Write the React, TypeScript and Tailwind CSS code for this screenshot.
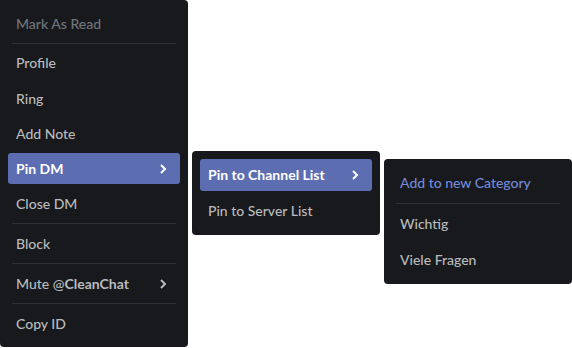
import React from "react";

const Chevron = () => (
  <svg width="18" height="18" viewBox="0 0 18 18" className="shrink-0">
    <polyline points="7,5 11,9 7,13" fill="none" stroke="currentColor" strokeWidth="2" strokeLinecap="butt" strokeLinejoin="miter" />
  </svg>
);

type ItemProps = {
  children: React.ReactNode;
  active?: boolean;
  sub?: boolean;
  tone?: "normal" | "muted" | "brand";
};

const Item = ({ children, active, sub, tone = "normal" }: ItemProps) => {
  const color = active
    ? "bg-[#5c6eb1] text-white font-bold"
    : tone === "muted"
    ? "text-[#72767d] font-medium"
    : tone === "brand"
    ? "text-[#7289da] font-medium"
    : "text-[#b9bbbe] font-medium";
  return (
    <div className={`my-[2px] flex h-8 items-center justify-between rounded-[3px] px-2 text-[14px] leading-[18px] ${color}`}>
      <span>{children}</span>
      {sub && <Chevron />}
    </div>
  );
};

const Sep = () => <div className="mx-1 my-[2px] h-px bg-[#2e3035]" />;

const Menu = ({ children, className = "" }: { children: React.ReactNode; className?: string }) => (
  <div className={`flex w-[188px] shrink-0 flex-col bg-[#18191c] px-2 py-[6px] ${className}`}>{children}</div>
);

export default function App() {
  return (
    <div
      className="flex h-[348px] w-[572px] items-start gap-1 overflow-hidden bg-white"
      style={{ fontFamily: "Lato, 'Noto Sans', sans-serif" }}
    >
      <Menu className="h-[347px] rounded-r-[4px] rounded-bl-[4px]">
        <Item tone="muted">Mark As Read</Item>
        <Sep />
        <Item>Profile</Item>
        <Item>Ring</Item>
        <Item>Add Note</Item>
        <Item active sub>Pin DM</Item>
        <Item>Close DM</Item>
        <Sep />
        <Item>Block</Item>
        <Sep />
        <Item sub>
          Mute @<span className="font-bold">CleanChat</span>
        </Item>
        <Sep />
        <Item>Copy ID</Item>
      </Menu>
      <Menu className="mt-[151px] rounded-[4px]">
        <Item active sub>Pin to Channel List</Item>
        <Item>Pin to Server List</Item>
      </Menu>
      <Menu className="mt-[159px] rounded-[4px]">
        <Item tone="brand">Add to new Category</Item>
        <Sep />
        <Item>Wichtig</Item>
        <Item>Viele Fragen</Item>
      </Menu>
    </div>
  );
}
